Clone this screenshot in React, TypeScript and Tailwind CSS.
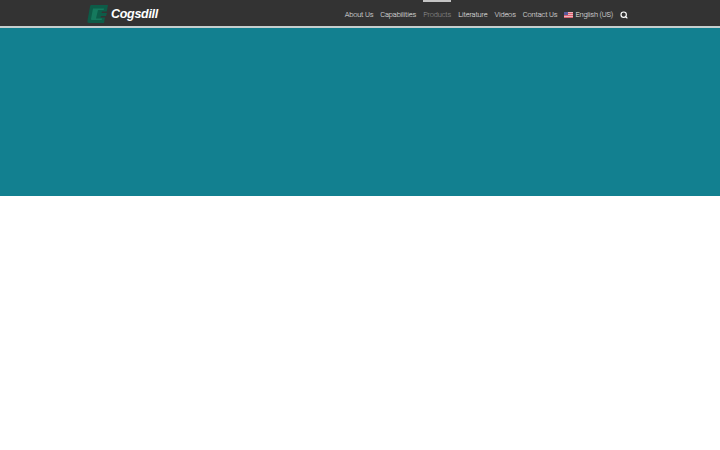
import { Search } from "lucide-react";

const links = ["About Us", "Capabilities", "Products", "Literature", "Videos", "Contact Us"];

function Logo() {
  return (
    <div className="flex items-center gap-[3px]">
      <svg width="21" height="18" viewBox="0 0 21 18">
        <path d="M4 0H21L19.800 6.500H15L14.600 8H20L19 11H14L13.600 12.500H18L17 18H2Q0 18 0.400 16L3 1.500Q3.300 0 4 0Z" fill="#0d5c48" />
        <path d="M6 3.500H17L16.700 5H11L9 13.500H15L14.700 15H5Q3.800 15 4 14Z" fill="#15795d" />
      </svg>
      <span className="font-['Liberation_Sans',sans-serif] text-[12.500px] font-bold italic leading-none tracking-[-0.3px] text-white antialiased">
        Cogsdill
      </span>
    </div>
  );
}

function UsFlag() {
  return (
    <svg width="9" height="6" viewBox="0 0 9 6">
      <rect width="9" height="6" fill="#eeb4bc" />
      <rect y="1" width="9" height="1" fill="#d9616f" />
      <rect y="3" width="9" height="1" fill="#d9616f" />
      <rect y="5" width="9" height="1" fill="#d9616f" />
      <rect width="4" height="3" fill="#5a5a9a" />
    </svg>
  );
}

export default function App() {
  return (
    <div className="flex h-[450px] w-[720px] flex-col overflow-hidden bg-white font-['Roboto',sans-serif]">
      <header className="flex h-[26px] items-stretch justify-between bg-[#333333] pl-[87px] pr-[92px]">
        <div className="flex items-center pt-[2px]">
          <Logo />
        </div>
        <nav className="flex items-stretch gap-[7.100px] text-[7.500px] font-light tracking-[-0.2px] text-[#ececec] antialiased">
          {links.map((link) => (
            <a
              key={link}
              className={
                link === "Products"
                  ? "flex items-center border-t-2 border-[#c4c4c4] pt-[2px] text-[#939393]"
                  : "flex items-center border-t-2 border-transparent pt-[2px]"
              }
            >
              {link}
            </a>
          ))}
          <a className="flex items-center gap-[2px] border-t-2 border-transparent pt-[2px]">
            <UsFlag />
            <span>English (US)</span>
          </a>
          <a className="flex items-center border-t-2 border-transparent pt-[2px]">
            <Search size={8} strokeWidth={3.500} className="text-white" />
          </a>
        </nav>
      </header>
      <div className="h-[2px] bg-[#c5cfcf]" />
      <main className="h-[168px] bg-[#128090]" />
      <div className="flex-1 bg-white" />
    </div>
  );
}
